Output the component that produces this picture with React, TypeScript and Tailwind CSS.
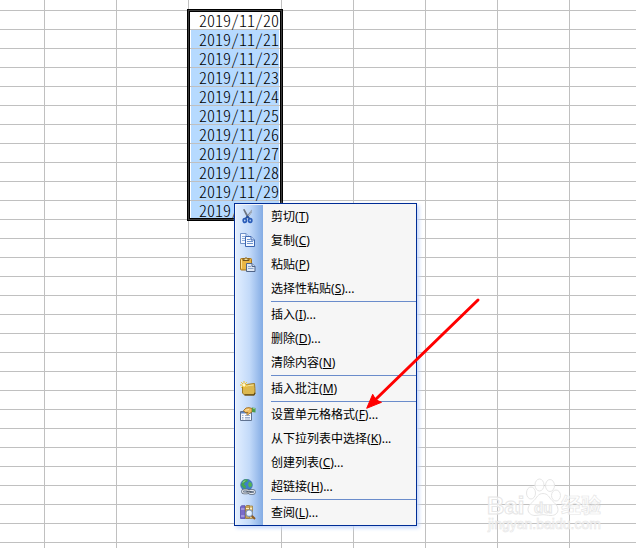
import { Fragment } from "react";
import type { ReactNode } from "react";

type MenuItem = {
  label: string;
  accessKey: string;
  more?: boolean;
  icon?: ReactNode;
};

const columns = [
  "w-[45px]",
  "w-[72px]",
  "w-[72px]",
  "w-[93px]",
  "w-[72px]",
  "w-[72px]",
  "w-[72px]",
  "w-[72px]",
  "",
];

const DATE_COLUMN = 3;

const dates = [
  "2019/11/20",
  "2019/11/21",
  "2019/11/22",
  "2019/11/23",
  "2019/11/24",
  "2019/11/25",
  "2019/11/26",
  "2019/11/27",
  "2019/11/28",
  "2019/11/29",
  "2019/11/30",
];

const rows = Array.from({ length: 29 }, (_, i) => dates[i]);

function CutIcon() {
  return (
    <svg viewBox="0 0 16 16" className="size-4">
      <path d="M3 0.500l1.500-.5L9 8 7.500 9.500z" fill="#6d7480" />
      <path d="M11.800 0.500v3L7.500 9.500 6 8z" fill="#7d8796" />
      <path d="M11 1.500v2L8.500 7" fill="none" stroke="#c9d0da" strokeWidth=".8" />
      <ellipse cx="4.800" cy="11.500" rx="1.600" ry="1.900" fill="none" stroke="#2a5cb8" strokeWidth="1.700" />
      <ellipse cx="10.200" cy="11.500" rx="1.600" ry="1.900" fill="none" stroke="#2a5cb8" strokeWidth="1.700" />
      <path d="M5.500 9.500L7.500 7.500 9.500 9.500" fill="none" stroke="#244f9e" strokeWidth="1.600" />
    </svg>
  );
}

function CopyIcon() {
  return (
    <svg viewBox="0 0 16 16" className="size-4">
      <path d="M.5.5H6L9.500 4v6.500H.5z" fill="#f4f8ff" stroke="#6f91c9" />
      <path d="M6 .5V4h3.500" fill="#c8daf5" stroke="#6f91c9" />
      <path d="M2 3.500h3M2 5.500h4M2 7.500h4" stroke="#8eaddb" />
      <path d="M5.500 3.500H11L14.500 7v6.500h-9z" fill="#f4f8ff" stroke="#3c66b0" />
      <path d="M11 3.500V7h3.500" fill="#c8daf5" stroke="#3c66b0" />
      <path d="M7 6.500h3M7 8.500h6M7 10.500h6" stroke="#6e94cf" />
    </svg>
  );
}

function PasteIcon() {
  return (
    <svg viewBox="0 0 16 16" className="size-4">
      <rect x=".5" y="1.500" width="11" height="11.500" rx="1" fill="#eab644" stroke="#a9761c" />
      <path d="M1.500 2.500v9" stroke="#ffe293" />
      <path d="M3 3.500V2h1.500Q6 -.8 7.500 2H9v1.500z" fill="#f5df9a" stroke="#765418" />
      <path d="M6.500 6.500h5.500l3 3v5H6.500z" fill="#dfe8f5" stroke="#4f6488" />
      <path d="M12 6.500v3h3" fill="#cbd8ec" stroke="#4f6488" />
      <path d="M8 9.500h3M8 11.500h5.500" stroke="#8ea5c8" />
    </svg>
  );
}

function CommentIcon() {
  return (
    <svg viewBox="0 0 16 16" className="size-4">
      <path d="M2.500 4.500Q8 3 14.500 2.500q.6 5 .5 10l-1 1.500H4.500l-2-2z" fill="#dcb850" stroke="#a07b25" />
      <path d="M4 5.500q5-1.200 9.500-1.500" stroke="#f6e49a" fill="none" />
      <path d="M4.500 13.800H14l1-2" stroke="#5e4714" strokeWidth="1.200" fill="none" />
      <path d="M4 0v8M0 4h8M1.200 1.200l5.600 5.600M6.800 1.200L1.200 6.800" stroke="#f1bf29" />
      <circle cx="4" cy="4" r="1.600" fill="#fff8cd" />
    </svg>
  );
}

function FormatIcon() {
  return (
    <svg viewBox="0 0 16 16" className="size-4">
      <path d="M.5 4.500h11v9H.5z" fill="#f7f9fd" stroke="#5f7291" />
      <path d="M1 5h10v1.500H1z" fill="#5f86c6" />
      <path d="M2 8.500h1.500M2 10.500h1.500M2 12h1.500M5 8.500h5M5 10.500h5M5 12h5" stroke="#8fa3c4" strokeWidth=".9" />
      <path d="M3.500 3.500L6 1q3-1 6 .5v3.500L9.500 6.500 7.500 8 6.500 7 8 5.500H5z" fill="#f0bd62" stroke="#94651c" strokeWidth=".8" />
      <path d="M5.500 3.200L9 2.500" stroke="#ffe4a8" />
      <path d="M12 .5l3.500.5v4.500L12 5z" fill="#4d9a4a" />
      <path d="M13 1.500l2 .2" stroke="#9bd08e" />
    </svg>
  );
}

function LinkIcon() {
  return (
    <svg viewBox="0 0 16 16" className="size-4">
      <circle cx="6.500" cy="6" r="5.800" fill="#3d7fc9" stroke="#3266a6" strokeWidth=".7" />
      <path d="M3 1.500Q6-.5 8 1l-1 2-2 .5-1 2 2 1.500-.5 3-2-1L1 6z" fill="#45a653" />
      <path d="M9 2.500l2.500 1.500.5 3-2.500 1.500L8 6z" fill="#55b450" />
      <path d="M3 3.500L5 1.500" stroke="#b4e6b4" />
      <g fill="none" stroke="#5d6877" strokeWidth="2.400">
        <rect x="2.500" y="11" width="6" height="3" rx="1.500" />
        <rect x="9" y="11.500" width="5.500" height="3" rx="1.500" />
      </g>
      <g fill="none" stroke="#e3e8ef" strokeWidth="1.100">
        <rect x="2.500" y="11" width="6" height="3" rx="1.500" />
        <rect x="9" y="11.500" width="5.500" height="3" rx="1.500" />
      </g>
      <path d="M6.500 12.800h5" stroke="#4d5866" strokeWidth="1.200" />
    </svg>
  );
}

function ResearchIcon() {
  return (
    <svg viewBox="0 0 16 16" className="size-4">
      <path d="M.5 2L1.500.7H5V13.500H.5z" fill="#7a6cc9" stroke="#5c50a8" strokeWidth=".8" />
      <path d="M1 4h3.500M1 11h3.500" stroke="#c7bff2" />
      <path d="M5.500 1.500L6.500.5h3V13.500h-4z" fill="#caa353" stroke="#8f7138" strokeWidth=".8" />
      <path d="M9.500 1h3v12.500h-3z" fill="#e3c683" stroke="#9d8045" strokeWidth=".8" />
      <path d="M6 3.500h3M10 3.500h2" stroke="#fff0c1" />
      <path d="M11.500 10.500l3.500 3.500" stroke="#8d5a22" strokeWidth="2" />
      <circle cx="9.200" cy="8.200" r="3.200" fill="#e6f3ff" stroke="#7f92b0" strokeWidth="1.100" />
      <path d="M7.500 8q.3-1.500 1.700-1.700" fill="none" stroke="#fff" />
    </svg>
  );
}

const groups: MenuItem[][] = [
  [
    { label: "剪切", accessKey: "T", icon: <CutIcon /> },
    { label: "复制", accessKey: "C", icon: <CopyIcon /> },
    { label: "粘贴", accessKey: "P", icon: <PasteIcon /> },
    { label: "选择性粘贴", accessKey: "S", more: true },
  ],
  [
    { label: "插入", accessKey: "I", more: true },
    { label: "删除", accessKey: "D", more: true },
    { label: "清除内容", accessKey: "N" },
  ],
  [{ label: "插入批注", accessKey: "M", icon: <CommentIcon /> }],
  [
    { label: "设置单元格格式", accessKey: "F", more: true, icon: <FormatIcon /> },
    { label: "从下拉列表中选择", accessKey: "K", more: true },
    { label: "创建列表", accessKey: "C", more: true },
    { label: "超链接", accessKey: "H", more: true, icon: <LinkIcon /> },
  ],
  [{ label: "查阅", accessKey: "L", more: true, icon: <ResearchIcon /> }],
];

function Sheet() {
  return (
    <table className="w-full table-fixed border-separate border-spacing-0">
      <colgroup>
        {columns.map((width, i) => (
          <col key={i} className={width} />
        ))}
      </colgroup>
      <tbody>
        <tr className="h-[11px]">
          {columns.map((_, i) => (
            <td key={i} className="border-r border-b border-[#c0c0c0] p-0 last:border-r-0" />
          ))}
        </tr>
        {rows.map((date, r) => (
          <tr key={r} className="h-[19px]">
            {columns.map((_, c) => (
              <td key={c} className="relative border-r border-b border-[#c0c0c0] p-0 last:border-r-0">
                {c === DATE_COLUMN && date && <DateCell date={date} active={r === 0} />}
              </td>
            ))}
          </tr>
        ))}
      </tbody>
    </table>
  );
}

function DateCell({ date, active }: { date: string; active: boolean }) {
  return (
    <>
      {/* half-width figures keep every date on the same 8px grid */}
      <div
        className={
          active
            ? "mx-0.5 h-[18px] text-right font-['Noto_Sans_CJK_SC',sans-serif] text-base leading-[19px] font-light text-black [font-feature-settings:'hwid']"
            : "mx-0.5 h-[18px] bg-[#b6daff] text-right font-['Noto_Sans_CJK_SC',sans-serif] text-base leading-[19px] font-light text-black [font-feature-settings:'hwid']"
        }
      >
        {date}
      </div>
      {/* selection frame, 11 rows tall */}
      {active && (
        <div className="pointer-events-none absolute -top-px -left-px z-10 h-[210px] w-[94px] border border-[#3c3c3c] shadow-[0_0_0_1px_#000,inset_0_0_0_1px_#000]" />
      )}
    </>
  );
}

function ContextMenu() {
  return (
    <div
      role="menu"
      className="absolute top-[203px] left-[234px] z-20 w-[183px] border border-[#002d96] bg-[#f6f6f6] pt-px pl-px font-['Noto_Sans','Noto_Sans_CJK_SC',sans-serif] text-xs text-black shadow-[2px_2px_4px_#c3d6fa]"
    >
      {groups.map((items, g) => (
        <Fragment key={g}>
          {g > 0 && (
            <div role="separator" className="flex h-0.5">
              <span className="w-[27px] bg-linear-to-r from-[#e1eeff] via-[#c3daf9] to-[#84ace4]" />
              <span className="ml-2 h-px flex-1 bg-[#6a8ccb]" />
            </div>
          )}
          {items.map((item) => (
            <button
              key={item.label}
              type="button"
              role="menuitem"
              className="flex h-6 w-full items-center text-left whitespace-nowrap"
            >
              <span className="flex h-6 w-[27px] items-center bg-linear-to-r from-[#e1eeff] via-[#c3daf9] to-[#84ace4] pl-1">
                {item.icon}
              </span>
              <span className="pl-2">
                {item.label}(<u className="underline-offset-1">{item.accessKey}</u>)
                {item.more && "..."}
              </span>
            </button>
          ))}
        </Fragment>
      ))}
    </div>
  );
}

function Arrow() {
  return (
    <svg viewBox="0 0 120 116" className="pointer-events-none absolute top-[296px] left-[362px] z-30 h-[116px] w-[120px]">
      <path d="M116 4L13 104" stroke="#f00" strokeWidth="3" strokeLinecap="round" />
      <path d="M4.700 112.300L10.700 98.300 13.700 103.700 19.500 106.300z" fill="#f00" stroke="#f00" />
    </svg>
  );
}

function Watermark() {
  return (
    <svg viewBox="0 0 120 62" className="pointer-events-none absolute top-[476px] left-[484px] h-[62px] w-[120px]">
      <g fill="#fff" fillOpacity=".7" stroke="#e6e6e6" strokeWidth="1">
        <ellipse cx="47" cy="17" rx="4.500" ry="6" />
        <ellipse cx="55.500" cy="9" rx="4.500" ry="6" />
        <ellipse cx="66" cy="9.500" rx="4.500" ry="6" />
        <ellipse cx="72" cy="19.500" rx="4.500" ry="5.500" />
        <path d="M59 17.500c5 0 6 4 9 7s6 5 6 9-3 6-7 6-5-.8-8-.8-5 .8-8 .8-7-2-7-6 3-6 6-9 4-7 9-7z" />
        <g className="font-['Liberation_Sans',sans-serif] font-bold">
          <text x="3" y="38" fontSize="24">Bai</text>
          <text x="50" y="37" fontSize="15">du</text>
        </g>
        <text x="77" y="37" fontSize="20" strokeWidth=".7" className="font-['Noto_Sans_CJK_SC',sans-serif] font-bold">
          经验
        </text>
        <text x="4" y="53" fontSize="14" strokeWidth=".6" className="font-['Liberation_Sans',sans-serif]">
          jingyan.baidu.com
        </text>
      </g>
    </svg>
  );
}

export default function App() {
  return (
    <main className="relative h-screen overflow-hidden bg-white">
      <Sheet />
      <Watermark />
      <ContextMenu />
      <Arrow />
    </main>
  );
}
